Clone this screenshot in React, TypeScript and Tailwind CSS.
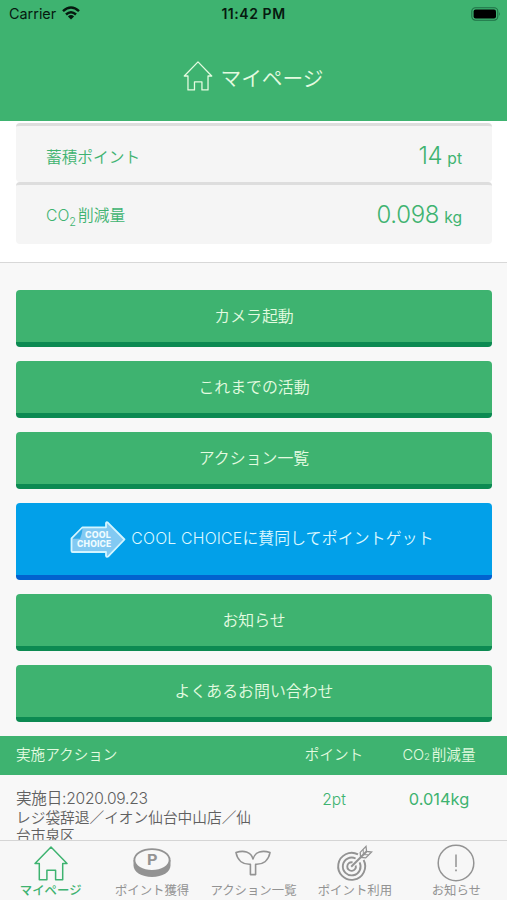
import type { ReactNode } from 'react';
import clsx from 'clsx';

const tabs = [
  { label: 'マイページ', icon: HomeIcon, active: true },
  { label: 'ポイント獲得', icon: CoinIcon },
  { label: 'アクション一覧', icon: SproutIcon },
  { label: 'ポイント利用', icon: TargetIcon },
  { label: 'お知らせ', icon: NoticeIcon },
];

function HomeIcon({ className = 'w-[34px] h-[35px]', strokeWidth = 1.5 }: { className?: string; strokeWidth?: number }) {
  return (
    <svg viewBox="0 0 34 35" className={className} fill="none" stroke="currentColor" strokeWidth={strokeWidth} strokeLinejoin="round">
      <path d="M17 1 L33 17.5 H28.7 V33.8 H21.6 V24.3 H12.9 V33.8 H5.3 V17.5 H1 Z" />
    </svg>
  );
}

function CoinIcon() {
  return (
    <svg viewBox="0 0 38 30" className="w-[38px] h-[30px]">
      <path d="M0.5 12 V17.5 C0.5 24 8.5 29 19 29 S37.5 24 37.5 17.5 V12 Z" fill="currentColor" />
      <ellipse cx="19" cy="12" rx="17.6" ry="10.9" fill="#f7f7f7" stroke="currentColor" strokeWidth="1.8" />
      <text x="19.3" y="16.8" textAnchor="middle" fontSize="14" fontWeight="700" fill="currentColor" textLength="10.5" lengthAdjust="spacingAndGlyphs">P</text>
    </svg>
  );
}

function SproutIcon() {
  return (
    <svg viewBox="0 0 36 26" className="w-[36px] h-[26px]" fill="none" stroke="currentColor" strokeWidth="1.6" strokeLinejoin="round">
      <path d="M15.4 24.6 V14.2 C8 14.6 2.5 10.5 1 2.6 C8.5 0 16 1.6 18 9 C20 1.6 27.5 0 35 2.6 C33.5 10.5 28 14.6 20.6 14.2 V24.6 Z" />
    </svg>
  );
}

function TargetIcon() {
  return (
    <svg viewBox="0 0 37 37" className="w-[37px] h-[37px]" fill="none" stroke="currentColor" strokeWidth="1.9">
      <path d="M22 9.4 A13.5 13.5 0 1 0 27.6 15" />
      <path d="M19.6 13.5 A8.9 8.9 0 1 0 23.6 17.4" />
      <path d="M16.6 17.4 A4.3 4.3 0 1 0 19.7 20.4" />
      <path d="M15.2 21.8 L30.5 6.5" strokeWidth="2" />
      <path d="M24.6 12.4 L24.2 7.4 L30 1.4 L30.6 6.4 L35.6 7 L29.7 12.9 Z" strokeWidth="1.3" />
      <path d="M27.4 9.6 L27.2 4.6 M27.4 9.6 L32.4 9.8" strokeWidth="1" />
    </svg>
  );
}

function NoticeIcon() {
  return (
    <svg viewBox="0 0 38 38" className="w-[38px] h-[38px]" fill="none" stroke="currentColor" strokeWidth="1.5">
      <circle cx="19" cy="19" r="17.8" />
      <path d="M19 10.5 V23" />
      <path d="M19 25.5 V27.2" strokeWidth="1.7" />
    </svg>
  );
}

function CoolChoiceLogo() {
  return (
    <svg viewBox="0 0 56 37" className="w-[56px] h-[37px] shrink-0">
      <path d="M1.5 30 V17.5 L12.5 6.3 H36 V2 Q36.5 0.5 38 1.8 L54.5 18.5 L38.5 35.2 Q36.5 36.6 36 34.8 V31 H2.5 Q1.5 31 1.5 30 Z" fill="#82c9f2" stroke="#d3f5ff" strokeWidth="1.8" strokeLinejoin="round" />
      <path d="M2.5 17.8 L12.6 7.3 Q12 14 10 17.8 Z" fill="#2da9e8" />
      <g className="font-[Inter]" fill="#f0fcff" fontWeight="800" fontSize="8.4">
        <text x="15" y="16.6" textLength="26" lengthAdjust="spacingAndGlyphs">COOL</text>
        <text x="7" y="26.4" textLength="34.5" lengthAdjust="spacingAndGlyphs">CHOICE</text>
      </g>
    </svg>
  );
}

function StatusBar() {
  return (
    <div className="grid grid-cols-3 items-center h-[27px] pl-[9px] pr-[6px] text-[#06190f]">
      <div className="flex items-center gap-[6px] font-[Inter] font-normal text-[14.4px]">
        Carrier
        <svg viewBox="0 0 18 14" className="w-[18px] h-[14px]" fill="none" stroke="currentColor" strokeWidth="2.5">
          <path d="M1 5.2 Q9 -2.2 17 5.2" />
          <path d="M4 8.5 Q9 3.9 14 8.5" />
          <path d="M9 13.5 L5.9 10.4 Q9 7.8 12.1 10.4 Z" fill="currentColor" stroke="none" />
        </svg>
      </div>
      <div className="-ml-[3px] text-center font-[Inter] text-[14px] font-semibold tracking-[0.55px] whitespace-nowrap">11:42 PM</div>
      <svg viewBox="0 0 30 14" className="w-[30px] h-[14px] justify-self-end">
        <rect x="0.8" y="0.8" width="26" height="12.4" rx="3.6" fill="none" stroke="#1f7045" strokeWidth="1.1" />
        <rect x="2.6" y="2.6" width="22.4" height="8.8" rx="2" fill="#000" />
        <path d="M28.2 5 Q29.8 7 28.2 9 Z" fill="#1f7045" />
      </svg>
    </div>
  );
}

function StatRow({ label, value, unit, className }: { label: ReactNode; value: string; unit: string; className?: string }) {
  return (
    <div className={clsx('flex items-center justify-between border-t-[3px] border-[#dddddd] rounded-[4px] bg-[#f5f5f5] px-[30px]', className)}>
      <div className="pt-[3px] text-[15.7px]">{label}</div>
      <div className="flex items-baseline gap-[5px] leading-none">
        <span className="font-light text-[24px] tracking-[-0.3px]">{value}</span>
        <span className="font-normal text-[15.6px]">{unit}</span>
      </div>
    </div>
  );
}

function MenuButton({ children }: { children: ReactNode }) {
  return (
    <button className="block w-full h-[57px] rounded-[4px] border-b-[5px] border-[#0c8a52] bg-[#3eb370] pt-px text-[15.9px] text-[#e4fbe0]">
      {children}
    </button>
  );
}

export default function App() {
  return (
    <div className="flex flex-col w-[507px] h-[900px] overflow-hidden bg-[#f8f8f8] text-[#3eb370] font-['Inter','Noto_Sans_CJK_JP',sans-serif] font-[350]" lang="ja">
      {/* Header */}
      <header className="h-[121px] shrink-0 bg-[#3eb370]">
        <StatusBar />
        <h1 className="flex items-center justify-center gap-[7px] h-[98px] text-[20.7px] text-[#e4fbe0]">
          <HomeIcon className="w-[30px] h-[30px]" strokeWidth={1.5} />
          <span className="pt-[5px]">マイページ</span>
        </h1>
      </header>

      {/* Totals */}
      <section className="h-[142px] shrink-0 pl-4 pr-[15px] pt-[2px] bg-white border-b-[1.5px] border-[#d8d8d8]">
        <StatRow label="蓄積ポイント" value="14" unit="pt" className="h-[59px] pt-[4px]" />
        <StatRow
          label={<>CO<span className="inline-block text-[11px] translate-y-[5px] mr-[2px]">2</span>削減量</>}
          value="0.098"
          unit="kg"
          className="h-[62px]"
        />
      </section>

      {/* Menu */}
      <nav className="flex flex-col gap-[14px] shrink-0 pl-4 pr-[15px] pt-[27px] pb-[14px]">
        <MenuButton>カメラ起動</MenuButton>
        <MenuButton>これまでの活動</MenuButton>
        <MenuButton>アクション一覧</MenuButton>
        <button className="flex items-center justify-center gap-[5px] w-full h-[77px] rounded-[4px] border-b-[5px] border-[#0262cf] bg-[#02a0e9] pr-[4px] text-[15.8px] tracking-[0.18px] text-[#dcf8ff] whitespace-nowrap">
          <CoolChoiceLogo />
          <span className="pb-px">COOL CHOICEに賛同してポイントゲット</span>
        </button>
        <MenuButton>お知らせ</MenuButton>
        <MenuButton>よくあるお問い合わせ</MenuButton>
      </nav>

      {/* Action history */}
      <section className="flex-1 min-h-0 overflow-hidden">
        <div className="flex items-center h-[39px] pl-4 bg-[#3eb370] text-[14.6px] text-[#e4fbe0]">
          <div className="w-[268px]">実施アクション</div>
          <div className="w-[100px] text-center">ポイント</div>
          <div className="w-[110px] text-center whitespace-nowrap">
            CO<span className="text-[9px] mr-[2px]">2</span>削減量
          </div>
        </div>
        <div className="flex pl-4 pt-[13px] text-[15.6px] leading-[21px]">
          <div className="w-[268px] text-[#606060]">
            <div className="tracking-[-0.25px]">実施日:2020.09.23</div>
            <div className="w-[240px] text-[14.7px] leading-[18px]">レジ袋辞退／イオン仙台中山店／仙台市泉区</div>
          </div>
          <div className="w-[100px] text-center pt-px">2pt</div>
          <div className="w-[110px] text-center pt-px text-[16.4px] font-normal">0.014kg</div>
        </div>
      </section>

      {/* Tab bar */}
      <footer className="grid grid-cols-5 h-[60px] shrink-0 border-t border-[#d5d5d5] bg-[#f7f7f7]">
        {tabs.map((tab) => (
          <div
            key={tab.label}
            className={clsx('flex flex-col items-center text-[12.4px] whitespace-nowrap', tab.active ? 'text-[#3eb370] font-medium' : 'text-[#939393] font-normal')}
          >
            <div className="flex items-center justify-center h-[38px] mt-[3px]">
              <tab.icon />
            </div>
            <div className="leading-[18px]">{tab.label}</div>
          </div>
        ))}
      </footer>
    </div>
  );
}
